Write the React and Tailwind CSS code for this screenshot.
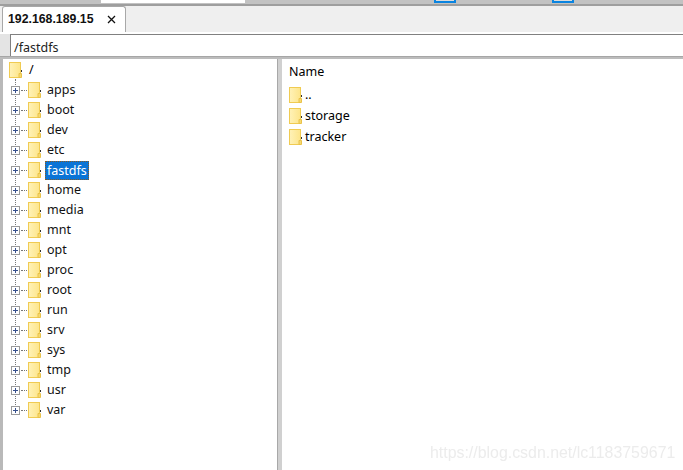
const dirs = ["apps","boot","dev","etc","fastdfs","home","media","mnt","opt","proc","root","run","srv","sys","tmp","usr","var"];

function Folder() {
  return (
    <svg width="13" height="16" viewBox="0 0 13 16" className="shrink-0 block">
      <defs>
        <linearGradient id="folderFill" x1="0" y1="0" x2="1" y2="0">
          <stop offset="0" stopColor="#fff2b8" />
          <stop offset="1" stopColor="#fde58a" />
        </linearGradient>
      </defs>
      <rect x="0.5" y="0.5" width="11" height="15" fill="url(#folderFill)" stroke="#f0cb52" />
      <path d="M10 11.5h2.5v4H10z" fill="#f7d96f" stroke="#e9c24a" strokeWidth="1" />
      <rect x="12" y="8" width="1" height="2" fill="#333" />
    </svg>
  );
}

function Plus() {
  return (
    <svg width="9" height="9" viewBox="0 0 9 9" className="block shrink-0">
      <rect x="0.5" y="0.5" width="8" height="8" fill="#fff" stroke="#9a9a9a" />
      <path d="M2 4.5h5M4.5 2v5" stroke="#37508c" strokeWidth="1" />
    </svg>
  );
}

function Row({ name }) {
  const selected = name === "fastdfs";
  return (
    <div className="h-5 flex items-center pl-[8px] relative">
      <Plus />
      <div className="w-[6px] border-t border-dotted border-[#777] mx-px" />
      <Folder />
      <span className={selected
        ? "ml-[4px] px-[1px] h-[19px] leading-[18px] bg-[#0a74d6] text-white border border-dotted border-[#8a5a20]"
        : "ml-[6px] pt-px text-[#111]"}>{name}</span>
    </div>
  );
}

export default function App() {
  return (
    <div className="w-[683px] h-[470px] relative overflow-hidden bg-white text-[12.5px]" style={{ fontFamily: '"Noto Sans", "Open Sans", sans-serif' }}>
      <div className="h-[4px] bg-[#c2c2c2] flex">
        <div className="w-[101px]" />
        <div className="w-[144px] h-[3px] bg-white" />
        <div className="ml-[189px] w-[22px] h-[3px] border-x-2 border-b-2 border-[#0a84e0] bg-[#dcdcdc]" />
        <div className="ml-[96px] w-[22px] h-[3px] border-x-2 border-b-2 border-[#0a84e0] bg-[#dcdcdc]" />
      </div>
      <div className="h-[2px] bg-[#9e9e9e]" />

      <div className="h-[26px] bg-[#efefef] flex items-end pl-[2px]">
        <div className="w-[124px] h-[26px] bg-white border border-b-0 border-[#a8a8a8] rounded-t-[3px] flex items-center pl-[5px] font-bold text-[#111] text-[12.3px]" style={{ fontFamily: '"Liberation Sans", sans-serif' }}>
          <span>192.168.189.15</span>
          <svg width="9" height="9" viewBox="0 0 9 9" className="ml-[14px]">
            <path d="M1 1l7 7M8 1l-7 7" stroke="#111" strokeWidth="1.3" />
          </svg>
        </div>
      </div>

      <div className="h-[2px] bg-white" />

      <div className="h-[22px] flex bg-white">
        <div className="w-[10px] bg-[#e4e4e4]" />
        <div className="flex-1 border-l border-t border-[#808080] pl-[3px] leading-[26px] text-[#222]">/fastdfs</div>
      </div>

      <div className="h-[1px] bg-[#a6a6a6]" />
      <div className="h-[2px] bg-[#bcbcbc]" />

      <div className="flex h-[411px]">
        <div className="w-[3px] bg-[#b9b9b9]" />
        <div className="w-[274px] pt-px relative">
          <div className="absolute left-[12px] top-[20px] h-[326px] border-l border-dotted border-[#777]" />
          <div className="h-5 flex items-center pl-[6px] relative">
            <Folder />
            <span className="ml-[7px]">/</span>
          </div>
          {dirs.map((d) => <Row key={d} name={d} />)}
        </div>
        <div className="w-[5px] bg-[#d0d0d0] border-l border-[#a8a8a8]" />
        <div className="flex-1 pl-[7px] pt-[3px]">
          <div className="h-[22px] leading-[19px]">Name</div>
          {["..","storage","tracker"].map((n) => (
            <div key={n} className="h-[21px] flex items-center">
              <Folder />
              <span className="ml-[3px] pt-[2px]">{n}</span>
            </div>
          ))}
        </div>
      </div>

      <div className="absolute left-[430px] top-[441px] text-[#ececec] text-[15.9px] whitespace-nowrap blur-[0.4px]" style={{ fontFamily: '"Liberation Sans", sans-serif' }}>https://blog.csdn.net/lc1183759671</div>
    </div>
  );
}
